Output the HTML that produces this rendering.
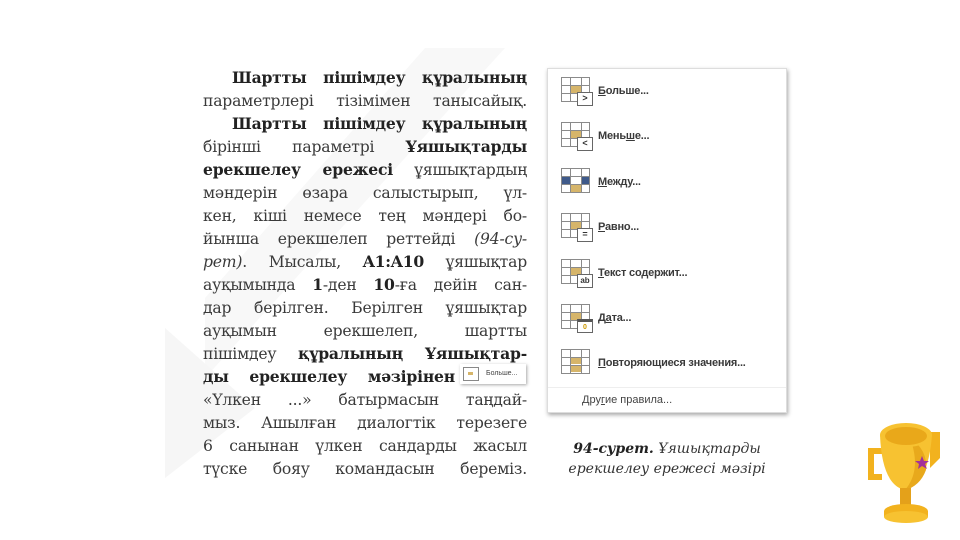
<!DOCTYPE html>
<html><head><meta charset="utf-8"><style>
body{margin:0;width:960px;height:540px;background:#fff;position:relative;overflow:hidden;font-family:"DejaVu Serif","Liberation Serif",serif}
.l{position:absolute;left:203px;width:324px;font-size:15.6px;color:#3a3a3a;text-align:justify;text-align-last:justify;white-space:nowrap;line-height:20px;height:20px;letter-spacing:-0.2px}
b{color:#222}
.menu{position:absolute;left:547px;top:68px;width:240px;height:345px;background:#fff;box-shadow:1px 2px 4px rgba(0,0,0,.35);border:1px solid #ddd;box-sizing:border-box}
.it{position:absolute;left:13px;height:28px;width:220px;font-family:"Liberation Sans",sans-serif;font-size:11px;color:#3a3a3a;font-weight:bold}
.it span{position:absolute;left:37px;top:8px;letter-spacing:-.2px}
.ic{position:absolute;left:0;top:0;width:29px;height:25px;border:1px solid #8a8a8a;box-sizing:border-box;background:
linear-gradient(#8a8a8a,#8a8a8a) 0 7px/100% 1px no-repeat,
linear-gradient(#8a8a8a,#8a8a8a) 0 15px/100% 1px no-repeat,
linear-gradient(#8a8a8a,#8a8a8a) 8px 0/1px 100% no-repeat,
linear-gradient(#8a8a8a,#8a8a8a) 19px 0/1px 100% no-repeat,#fff}
.gold{position:absolute;left:9px;top:8px;width:10px;height:7px;background:#d6b56a}
.bd{position:absolute;left:16px;top:15px;width:14px;height:12px;border:1px solid #666;background:#fff;font-size:9px;line-height:11px;text-align:center;color:#333;font-weight:bold}
.cap{position:absolute;left:555px;width:224px;text-align:center;font-style:italic;font-size:14px;color:#333}
</style></head><body>
<svg style="position:absolute;left:165px;top:48px" width="380" height="450"><path d="M260 0 L340 0 L40 330 L40 250 Z" fill="#f8f8f8"/><path d="M0 280 L90 360 L0 430 Z" fill="#f6f6f6"/></svg>
<div class="l" style="top:68px;left:232px;width:295px"><b>Шартты пішімдеу құралының</b></div>
<div class="l" style="top:91px">параметрлері тізімімен танысайық.</div>
<div class="l" style="top:114px;left:232px;width:295px"><b>Шартты пішімдеу құралының</b></div>
<div class="l" style="top:137px">бірінші параметрі <b>Ұяшықтарды</b></div>
<div class="l" style="top:160px"><b>ерекшелеу ережесі</b> ұяшықтардың</div>
<div class="l" style="top:183px">мәндерін өзара салыстырып, үл-</div>
<div class="l" style="top:206px">кен, кіші немесе тең мәндері бо-</div>
<div class="l" style="top:229px">йынша ерекшелеп реттейді <i>(94-су-</i></div>
<div class="l" style="top:252px"><i>рет)</i>. Мысалы, <b>A1:A10</b> ұяшықтар</div>
<div class="l" style="top:275px">ауқымында <b>1</b>-ден <b>10</b>-ға дейін сан-</div>
<div class="l" style="top:298px">дар берілген. Берілген ұяшықтар</div>
<div class="l" style="top:321px">ауқымын ерекшелеп, шартты</div>
<div class="l" style="top:344px">пішімдеу <b>құралының Ұяшықтар-</b></div>
<div class="l" style="top:367px;width:252px"><b>ды ерекшелеу мәзірінен</b></div>
<div style="position:absolute;left:460px;top:364px;width:66px;height:20px;box-shadow:1px 1px 3px rgba(0,0,0,.35);background:#fff;font:7px 'Liberation Sans',sans-serif;color:#444"><div style="position:absolute;left:3px;top:3px;width:14px;height:12px;border:1px solid #888;background:linear-gradient(#d6b56a,#d6b56a) 4px 4px/5px 3px no-repeat"></div><span style="position:absolute;left:26px;top:6px">Больше...</span></div>
<div class="l" style="top:390px">«Үлкен ...» батырмасын таңдай-</div>
<div class="l" style="top:413px">мыз. Ашылған диалогтік терезеге</div>
<div class="l" style="top:436px">6 санынан үлкен сандарды жасыл</div>
<div class="l" style="top:459px">түске бояу командасын береміз.</div>

<div class="menu">
<div class="it" style="top:8px"><div class="ic"><div class="gold"></div></div><div class="bd">&gt;</div><span><u>Б</u>ольше...</span></div>
<div class="it" style="top:53px"><div class="ic"><div class="gold"></div></div><div class="bd">&lt;</div><span>Мень<u>ш</u>е...</span></div>
<div class="it" style="top:99px"><div class="ic"><div class="gold" style="top:16px"></div><div style="position:absolute;left:0;top:8px;width:8px;height:7px;background:#3f5a8a"></div><div style="position:absolute;left:20px;top:8px;width:7px;height:7px;background:#3f5a8a"></div></div><span><u>М</u>ежду...</span></div>
<div class="it" style="top:144px"><div class="ic"><div class="gold"></div></div><div class="bd">=</div><span><u>Р</u>авно...</span></div>
<div class="it" style="top:190px"><div class="ic"><div class="gold"></div></div><div class="bd" style="font-size:8px">ab</div><span><u>Т</u>екст содержит...</span></div>
<div class="it" style="top:235px"><div class="ic"><div class="gold"></div></div><div class="bd" style="border-top:3px solid #555;height:10px;font-size:7px;color:#c90">0</div><span>Д<u>а</u>та...</span></div>
<div class="it" style="top:280px"><div class="ic"><div class="gold" style="top:8px;height:6px"></div><div class="gold" style="top:16px;height:6px"></div></div><span><u>П</u>овторяющиеся значения...</span></div>
<div style="position:absolute;left:0;top:318px;width:100%;border-top:1px solid #eee"></div>
<div style="position:absolute;left:34px;top:325px;font:11px 'Liberation Sans',sans-serif;color:#444">Дру<u>г</u>ие правила...</div>
</div>

<div class="cap" style="top:441px"><b>94-сурет.</b> Ұяшықтарды</div>
<div class="cap" style="top:461px">ерекшелеу ережесі мәзірі</div>

<svg style="position:absolute;left:860px;top:410px" width="90" height="115" viewBox="0 0 90 115">
<path d="M8 38 h14 v6 h-8 v20 h8 v6 h-14 z" fill="#f2b21e"/>
<path d="M70 22 h10 v26 l-10 10 z" fill="#f2b21e"/>
<path d="M20 25 Q22 75 45 80 Q68 75 72 25 Z" fill="#f7c231"/>
<path d="M50 28 Q68 40 66 60 Q60 76 45 80 Q62 60 50 28Z" fill="#e8a91c"/>
<ellipse cx="46" cy="25" rx="26" ry="12" fill="#f7c231"/>
<ellipse cx="46" cy="26" rx="21" ry="9" fill="#e9a81a"/>
<rect x="40" y="78" width="11" height="20" fill="#e4a11a"/>
<ellipse cx="46" cy="101" rx="22" ry="7" fill="#f2b21e"/>
<rect x="24" y="101" width="44" height="6" fill="#f2b21e"/><ellipse cx="46" cy="107" rx="22" ry="6" fill="#f7c231"/>
<path d="M62 46 l2 5 5 0 -4 3 2 5 -5 -3 -4 3 1 -5 -4 -3 5 0z" fill="#a3309c"/>
</svg>
</body></html>
